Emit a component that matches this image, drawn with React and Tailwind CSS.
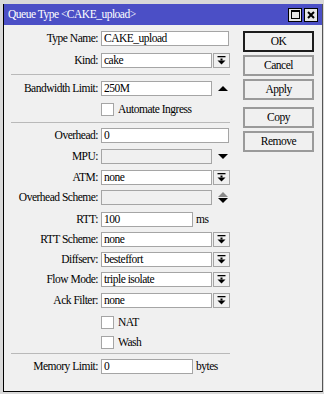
const font = "font-[family-name:'Liberation_Serif','Times_New_Roman',serif] text-[11.5px] tracking-[-0.5px] text-black";

const DropIcon = () => (
  <svg width="9" height="9" viewBox="0 0 9 9">
    <rect x="0.5" y="0" width="8" height="1.3" fill="#000" />
    <rect x="3.5" y="2.5" width="2" height="2" fill="#000" />
    <polygon points="0.5,4.5 8.5,4.5 4.5,8.5" fill="#000" />
  </svg>
);

const UpTri = ({ color = "#000" }) => (
  <svg width="10" height="5" viewBox="0 0 10 5">
    <polygon points="0,5 10,5 5,0" fill={color} />
  </svg>
);

const DownTri = ({ color = "#000" }) => (
  <svg width="10" height="5" viewBox="0 0 10 5">
    <polygon points="0,0 10,0 5,5" fill={color} />
  </svg>
);

const Row = ({ label, className = "", children }) => (
  <div className={`flex items-center h-[15px] ${className}`}>
    <div className="w-[94px] shrink-0 text-right whitespace-nowrap">{label}</div>
    <div className="ml-[3px] flex items-center">{children}</div>
  </div>
);

const Field = ({ value, w = "w-[128px]", disabled }) => (
  <div
    className={`${w} h-[15px] border border-[#a5a5a5] pl-[2px] leading-[13px] whitespace-nowrap overflow-hidden ${
      disabled ? "bg-[#f0f0f0]" : "bg-white"
    }`}>
    {value}
  </div>
);

const Select = ({ value }) => (
  <>
    <Field value={value} w="w-[111px]" />
    <div className="ml-[1px] w-[17px] h-[15px] border border-[#a5a5a5] bg-[#f0f0f0] flex items-center justify-center">
      <DropIcon />
    </div>
  </>
);

const Check = ({ label }) => (
  <>
    <div className="w-[13px] h-[13px] border border-[#a5a5a5] bg-white" />
    <span className="ml-[4px]">{label}</span>
  </>
);

const Sep = ({ className = "" }) => (
  <div className={`ml-[7px] w-[219px] h-px bg-[#b9b9b9] ${className}`} />
);

const Btn = ({ label, primary, className = "" }) => (
  <div
    className={`w-[71px] h-[21px] border-2 bg-[#f0f0f0] flex items-center justify-center ${
      primary ? "border-[#1c1c1c]" : "border-[#9a9a9a]"
    } ${className}`}>
    {label}
  </div>
);

export default function App() {
  return (
    <div className={`w-[324px] h-[394px] bg-[#d9d9d9] pt-[4px] pl-[3px] pr-[1px] pb-[2px] overflow-hidden ${font}`}>
      <div className="h-full flex flex-col bg-[#f0f0f0] border-l border-b border-r border-l-black border-b-black border-r-[#555]">
        <div className="h-[21px] shrink-0 bg-[#4b4fc6] flex items-center pl-[4px] pr-[4px]">
          <span className="text-white flex-1">Queue Type &lt;CAKE_upload&gt;</span>
          <div className="w-[14px] h-[14px] bg-[#e6e6e6] border border-black flex items-center justify-center">
            <div className="w-[9px] h-[9px] border border-black border-t-2" />
          </div>
          <div className="ml-[2px] w-[14px] h-[14px] bg-[#e6e6e6] border border-black flex items-center justify-center">
            <svg width="8" height="8" viewBox="0 0 8 8">
              <path d="M1 1 L7 7 M7 1 L1 7" stroke="#000" strokeWidth="2" />
            </svg>
          </div>
        </div>

        <div className="flex flex-1">
          <div className="w-[226px] pt-[6px] flex flex-col">
            <Row label="Type Name:">
              <Field value="CAKE_upload" />
            </Row>
            <Row label="Kind:" className="mt-[7px]">
              <Select value="cake" />
            </Row>
            <Sep className="mt-[6px]" />
            <Row label="Bandwidth Limit:" className="mt-[6px]">
              <Field value="250M" w="w-[111px]" />
              <div className="ml-[6px]">
                <UpTri />
              </div>
            </Row>
            <Row label="" className="mt-[6px]">
              <Check label="Automate Ingress" />
            </Row>
            <Sep className="mt-[5px]" />
            <Row label="Overhead:" className="mt-[5px]">
              <Field value="0" />
            </Row>
            <Row label="MPU:" className="mt-[6px]">
              <Field value="" w="w-[111px]" disabled />
              <div className="ml-[6px]">
                <DownTri />
              </div>
            </Row>
            <Row label="ATM:" className="mt-[6px]">
              <Select value="none" />
            </Row>
            <Row label="Overhead Scheme:" className="mt-[5px]">
              <Field value="" w="w-[111px]" disabled />
              <div className="ml-[6px] flex flex-col gap-[1px]">
                <UpTri color="#8a8a8a" />
                <DownTri />
              </div>
            </Row>
            <Row label="RTT:" className="mt-[7px]">
              <Field value="100" w="w-[92px]" />
              <span className="ml-[3px]">ms</span>
            </Row>
            <Row label="RTT Scheme:" className="mt-[5px]">
              <Select value="none" />
            </Row>
            <Row label="Diffserv:" className="mt-[5px]">
              <Select value="besteffort" />
            </Row>
            <Row label="Flow Mode:" className="mt-[5px]">
              <Select value="triple isolate" />
            </Row>
            <Row label="Ack Filter:" className="mt-[6px]">
              <Select value="none" />
            </Row>
            <Row label="" className="mt-[7px]">
              <Check label="NAT" />
            </Row>
            <Row label="" className="mt-[5px]">
              <Check label="Wash" />
            </Row>
            <Sep className="mt-[3px]" />
            <Row label="Memory Limit:" className="mt-[5px]">
              <Field value="0" w="w-[92px]" />
              <span className="ml-[3px]">bytes</span>
            </Row>
          </div>

          <div className="ml-[13px] pt-[6px] flex flex-col">
            <Btn label="OK" primary />
            <Btn label="Cancel" className="mt-[3px]" />
            <Btn label="Apply" className="mt-[3px]" />
            <Btn label="Copy" className="mt-[7px]" />
            <Btn label="Remove" className="mt-[3px]" />
          </div>
        </div>
      </div>
    </div>
  );
}
